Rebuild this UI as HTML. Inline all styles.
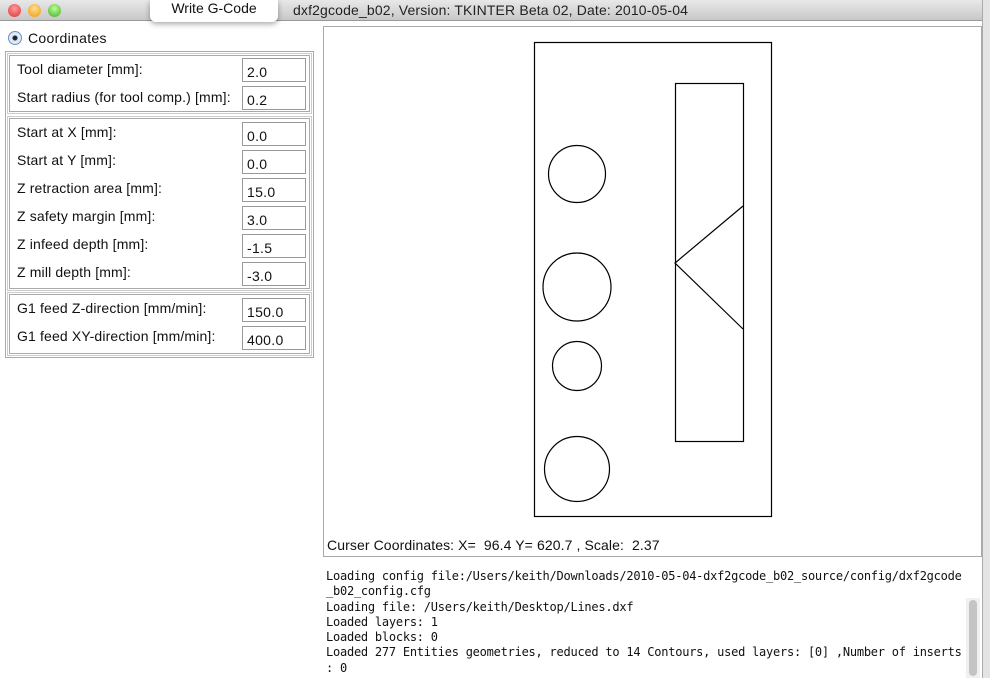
<!DOCTYPE html>
<html><head><style>
*{margin:0;padding:0;box-sizing:border-box}
body{width:990px;height:678px;overflow:hidden;background:#fff;font-family:"Liberation Sans",sans-serif;position:relative}
.tb{position:absolute;left:0;top:0;width:982px;height:21px;background:linear-gradient(#e8e8e8,#c8c8c8);border-bottom:1px solid #999}
.dot{position:absolute;top:4px;width:13px;height:13px;border-radius:50%}
.title{position:absolute;left:293px;top:2px;font-size:14px;color:#222;letter-spacing:0.15px}
.menu{position:absolute;left:150px;top:0;width:128px;height:22px;background:#fff;border-radius:0 0 6px 6px;box-shadow:0 2px 6px rgba(0,0,0,.35);font-size:14px;text-align:center;line-height:16px;color:#111}
.right{position:absolute;left:982px;top:0;width:8px;height:678px;background:#e4e4e4;border-left:1px solid #aaa}
.radio{position:absolute;left:8px;top:31px;width:14px;height:14px;border-radius:50%;border:1px solid #6a8fc0;background:radial-gradient(circle,#222 0 2px,#dfeaf8 3px)}
.lbl{position:absolute;font-size:14px;color:#111;letter-spacing:0.15px}
.grp{position:absolute;left:9px;width:301px;border:1px solid #aaa;box-shadow:0 0 0 1px #fff,0 0 0 2px #ccc}
.outer{position:absolute;left:5px;top:51px;width:309px;height:307px;border:1px solid #aaa}
.inp{position:absolute;left:242px;width:64px;height:24px;border:1px solid #999;background:#fff;font-size:14px;padding:5px 0 0 4px;color:#111;letter-spacing:0.3px}
.canvas{position:absolute;left:323px;top:26px;width:659px;height:531px;border:1px solid #aaa;background:#fff}
.log{position:absolute;left:326px;top:569px;font-family:"DejaVu Sans Mono","Liberation Mono",monospace;font-size:12px;line-height:15.3px;color:#111;white-space:pre;letter-spacing:-0.24px}
.sb{position:absolute;left:966px;top:598px;width:14px;height:80px;background:#f0f0f0}
.sb div{position:absolute;left:3px;top:2px;width:8px;height:76px;border-radius:4px;background:#c4c4c4}
</style></head><body>
<div class="tb">
<div class="dot" style="left:8px;background:radial-gradient(circle at 50% 35%,#f99,#d33)"></div>
<div class="dot" style="left:28px;background:radial-gradient(circle at 50% 35%,#fd9,#e90)"></div>
<div class="dot" style="left:48px;background:radial-gradient(circle at 50% 35%,#bf9,#4a2)"></div>
<div class="title">dxf2gcode_b02, Version: TKINTER Beta 02, Date: 2010-05-04</div>
</div>
<div class="menu">Write G-Code</div>
<div class="right"></div>
<div class="radio"></div>
<div class="lbl" style="left:28px;top:30px;font-size:14px;letter-spacing:0.3px">Coordinates</div>
<div class="outer"></div>
<div class="grp" style="top:55px;height:57px"></div>
<div class="grp" style="top:118px;height:171px"></div>
<div class="grp" style="top:294px;height:60px"></div>
<div class="lbl" style="left:17px;top:61px">Tool diameter [mm]:</div><div class="inp" style="top:58px">2.0</div>
<div class="lbl" style="left:17px;top:89px">Start radius (for tool comp.) [mm]:</div><div class="inp" style="top:86px">0.2</div>
<div class="lbl" style="left:17px;top:124px">Start at X [mm]:</div><div class="inp" style="top:122px">0.0</div>
<div class="lbl" style="left:17px;top:152px">Start at Y [mm]:</div><div class="inp" style="top:150px">0.0</div>
<div class="lbl" style="left:17px;top:180px">Z retraction area [mm]:</div><div class="inp" style="top:178px">15.0</div>
<div class="lbl" style="left:17px;top:208px">Z safety margin [mm]:</div><div class="inp" style="top:206px">3.0</div>
<div class="lbl" style="left:17px;top:236px">Z infeed depth [mm]:</div><div class="inp" style="top:234px">-1.5</div>
<div class="lbl" style="left:17px;top:264px">Z mill depth [mm]:</div><div class="inp" style="top:262px">-3.0</div>
<div class="lbl" style="left:17px;top:300px">G1 feed Z-direction [mm/min]:</div><div class="inp" style="top:298px">150.0</div>
<div class="lbl" style="left:17px;top:328px">G1 feed XY-direction [mm/min]:</div><div class="inp" style="top:326px">400.0</div>
<div class="canvas"></div>
<svg style="position:absolute;left:0;top:0" width="990" height="678">
<g fill="none" stroke="#000" stroke-width="1.2">
<rect x="534.5" y="42.5" width="237" height="474"/>
<rect x="675.5" y="83.5" width="68" height="358"/>
<polyline points="743,206 675,263 743,329"/>
<circle cx="577" cy="174" r="28.5"/>
<circle cx="577" cy="287" r="34"/>
<circle cx="577" cy="366" r="24.5"/>
<circle cx="577" cy="469" r="32.5"/>
</g></svg>
<div class="lbl" style="left:327px;top:537px;font-size:14px;letter-spacing:0.1px">Curser Coordinates: X=&nbsp; 96.4 Y= 620.7 , Scale:&nbsp; 2.37</div>
<div class="log">Loading config file:/Users/keith/Downloads/2010-05-04-dxf2gcode_b02_source/config/dxf2gcode
_b02_config.cfg
Loading file: /Users/keith/Desktop/Lines.dxf
Loaded layers: 1
Loaded blocks: 0
Loaded 277 Entities geometries, reduced to 14 Contours, used layers: [0] ,Number of inserts
: 0</div>
<div class="sb"><div></div></div>
</body></html>
